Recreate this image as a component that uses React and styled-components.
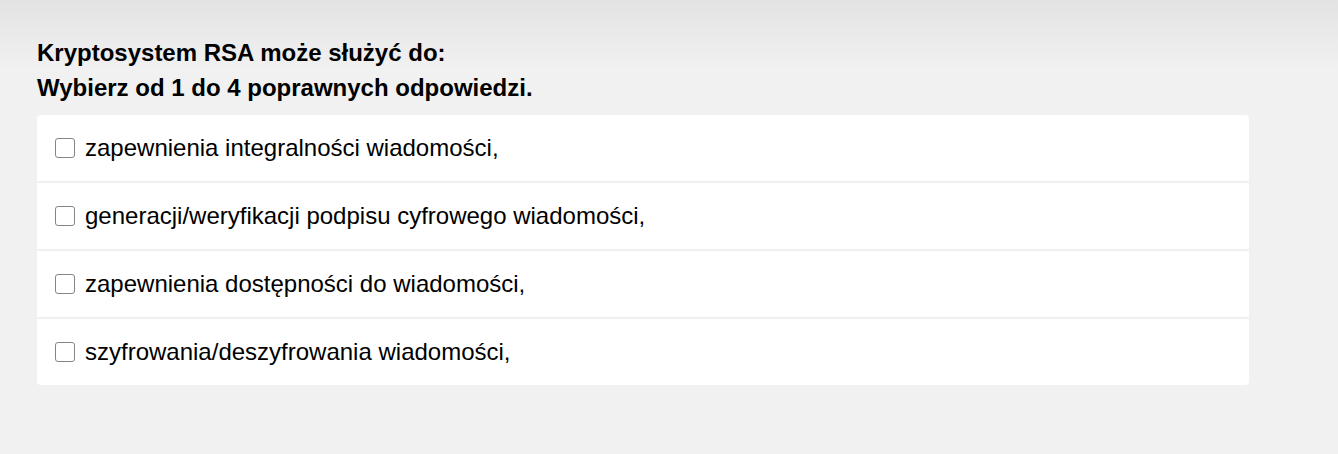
import React from "react";
import styled, { createGlobalStyle } from "styled-components";

const GlobalStyle = createGlobalStyle`
  html, body {
    margin: 0;
    padding: 0;
  }
  body {
    font-family: "Liberation Sans", Arial, sans-serif;
    background: linear-gradient(to bottom, #e3e3e3 0px, #f1f1f1 70px, #f1f1f1 100%);
    min-height: 454px;
    color: #000;
  }
`;

const Page = styled.main`
  padding: 35px 37px 40px;
`;

const Question = styled.h2`
  margin: 0 0 10px;
  font-size: 24px;
  font-weight: bold;
  line-height: 35px;
`;

const Card = styled.ul`
  list-style: none;
  margin: 0;
  padding: 0;
  width: 1212px;
  background: #f0f0f0;
  border-radius: 4px;
  display: flex;
  flex-direction: column;
  gap: 2px;
  overflow: hidden;
`;

const Row = styled.li`
  background: #fff;
  height: 66px;
  display: flex;
  align-items: center;
  padding: 0 18px;
`;

const Label = styled.label`
  display: flex;
  align-items: center;
  gap: 10px;
  font-size: 24px;
  cursor: pointer;
`;

const Box = styled.input.attrs({ type: "checkbox" })`
  appearance: none;
  margin: 0;
  width: 20px;
  height: 20px;
  flex: none;
  border: 1px solid #858585;
  border-radius: 3px;
  background: #fff;
  box-sizing: border-box;
  &:checked {
    background: #0075ff;
    border-color: #0075ff;
  }
`;

const answers = [
  "zapewnienia integralności wiadomości,",
  "generacji/weryfikacji podpisu cyfrowego wiadomości,",
  "zapewnienia dostępności do wiadomości,",
  "szyfrowania/deszyfrowania wiadomości,",
];

export default function App() {
  return (
    <>
      <GlobalStyle />
      <Page>
        <Question>
          Kryptosystem RSA może służyć do:
          <br />
          Wybierz od 1 do 4 poprawnych odpowiedzi.
        </Question>
        <Card>
          {answers.map((a) => (
            <Row key={a}>
              <Label>
                <Box />
                {a}
              </Label>
            </Row>
          ))}
        </Card>
      </Page>
    </>
  );
}
